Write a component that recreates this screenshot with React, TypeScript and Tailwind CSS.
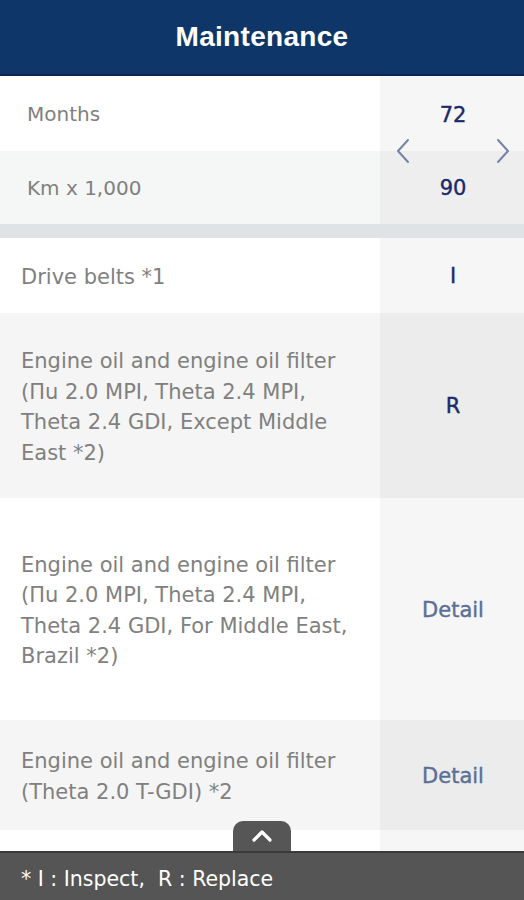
import React from 'react';

const body = "font-['DejaVu_Sans',sans-serif]";

type Item = {
  lines: string[];
  value: string;
  detail?: boolean;
  height: string;
  shade: boolean;
};

const items: Item[] = [
  { lines: ['Drive belts *1'], value: 'I', height: 'h-[75px]', shade: false },
  {
    lines: [
      'Engine oil and engine oil filter',
      '(Πu 2.0 MPI, Theta 2.4 MPI,',
      'Theta 2.4 GDI, Except Middle',
      'East *2)',
    ],
    value: 'R',
    height: 'h-[185px]',
    shade: true,
  },
  {
    lines: [
      'Engine oil and engine oil filter',
      '(Πu 2.0 MPI, Theta 2.4 MPI,',
      'Theta 2.4 GDI, For Middle East,',
      'Brazil *2)',
    ],
    value: 'Detail',
    detail: true,
    height: 'h-[222px]',
    shade: false,
  },
  {
    lines: ['Engine oil and engine oil filter', '(Theta 2.0 T-GDI) *2'],
    value: 'Detail',
    detail: true,
    height: 'h-[110px]',
    shade: true,
  },
  { lines: [''], value: '', height: 'h-[110px]', shade: false },
];

function Chevron({ dir }: { dir: 'left' | 'right' }) {
  return (
    <svg width="14" height="26" viewBox="0 0 14 26" fill="none">
      <path
        d={dir === 'left' ? 'M12 2 L2 13 L12 24' : 'M2 2 L12 13 L2 24'}
        stroke="#7383a8"
        strokeWidth="2"
        strokeLinecap="round"
        strokeLinejoin="round"
      />
    </svg>
  );
}

export default function App() {
  return (
    <div className={`relative w-[524px] h-[900px] overflow-hidden bg-white ${body}`}>
      {/* Header */}
      <div className="h-[76px] bg-[#0f3669] border-b-2 border-[#0a2651] flex items-center justify-center">
        <h1 className="text-white text-[28px] font-bold font-['Liberation_Sans',sans-serif] tracking-[0.3px]">
          Maintenance
        </h1>
      </div>

      {/* Interval selector */}
      <div className="relative">
        <div className="flex h-[75px] bg-white">
          <div className="flex-1 flex items-center pl-[27px] text-[20px] text-[#808080]">Months</div>
          <div className="w-[144px] pl-[2px] pt-[4px] bg-[#f6f6f6] flex items-center justify-center text-[21px] text-[#1b2a6b] [-webkit-text-stroke:0.4px_#1b2a6b]">
            72
          </div>
        </div>
        <div className="flex h-[73px] bg-[#f5f6f6]">
          <div className="flex-1 flex items-center pl-[27px] text-[20px] text-[#808080]">Km x 1,000</div>
          <div className="w-[144px] pl-[2px] pt-[3px] bg-[#eeeeee] flex items-center justify-center text-[21px] text-[#1b2a6b] [-webkit-text-stroke:0.4px_#1b2a6b]">
            90
          </div>
        </div>
        <div className="absolute right-[14px] top-[62px] w-[114px] flex justify-between">
          <Chevron dir="left" />
          <Chevron dir="right" />
        </div>
      </div>

      <div className="h-[14px] bg-[#dfe3e5]" />

      {/* Items */}
      {items.map((it, i) => (
        <div key={i} className={`flex ${it.height} ${it.shade ? 'bg-[#f5f5f5]' : 'bg-white'}`}>
          <div className="flex-1 flex items-center pl-[21px] pt-[3px] text-[21px] leading-[30.5px] text-[#808080]">
            <div>
              {it.lines.map((l, j) => (
                <div key={j}>{l}</div>
              ))}
            </div>
          </div>
          <div
            className={`w-[144px] pl-[2px] pt-[3px] flex items-center justify-center text-[21px] ${
              it.shade ? 'bg-[#ececec]' : 'bg-[#f6f6f6]'
            } ${
              it.detail
                ? 'text-[#5b7096] [-webkit-text-stroke:0.4px_#5b7096]'
                : 'text-[#1b2a6b] [-webkit-text-stroke:0.4px_#1b2a6b]'
            }`}
          >
            {it.value}
          </div>
        </div>
      ))}

      {/* Footer legend */}
      <div className="absolute left-0 right-0 bottom-0">
        <div className="flex justify-center">
          <div className="w-[58px] h-[30px] bg-[#565656] rounded-t-[10px] flex items-center justify-center">
            <svg width="22" height="14" viewBox="0 0 22 14" fill="none">
              <path d="M3 11 L11 3 L19 11" stroke="white" strokeWidth="3.2" strokeLinecap="round" strokeLinejoin="round" />
            </svg>
          </div>
        </div>
        <div className="h-[49px] bg-[#555555] border-t-2 border-[#3a3a3a] flex items-center pl-[21px] pt-[5px] text-white text-[20.5px]">
          <span className="whitespace-pre">* I : Inspect,  R : Replace</span>
        </div>
      </div>
    </div>
  );
}
